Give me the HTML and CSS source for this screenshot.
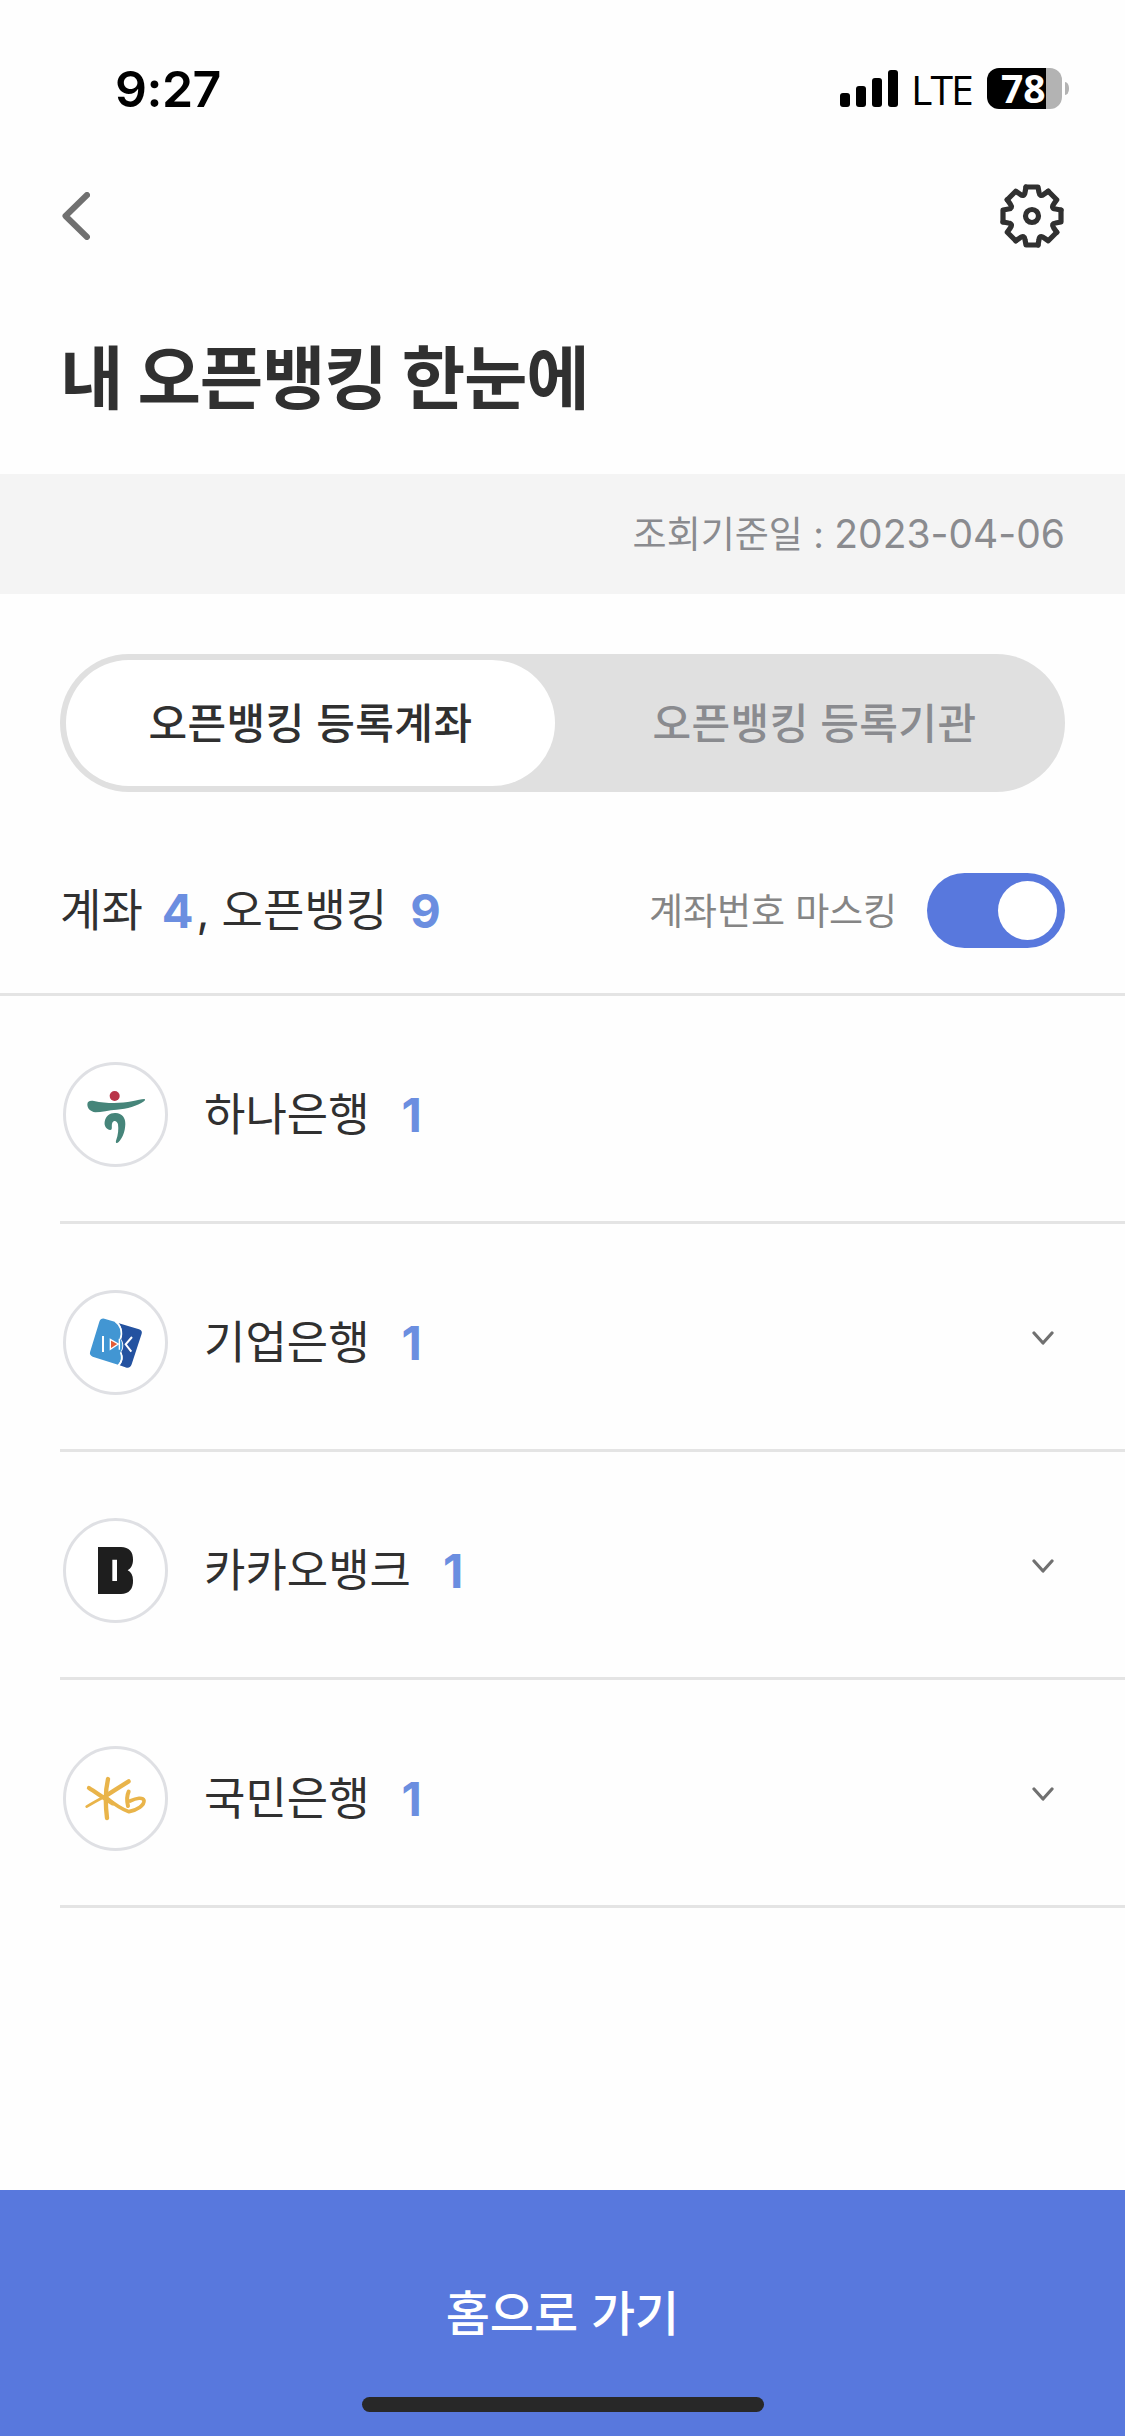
FILE: index.html
```
<!DOCTYPE html>
<html lang="ko">
<head>
<meta charset="utf-8">
<title>내 오픈뱅킹 한눈에</title>
<link rel="stylesheet" href="styles.css">
</head>
<body>
<div class="screen">
  <div class="status-bar">
    <span class="time">9:27</span>
    <div class="status-icons">
      <svg class="signal" viewBox="0 0 58 37"><rect y="23" width="10" height="14" rx="3"/><rect x="16" y="16" width="10" height="21" rx="3"/><rect x="32" y="8" width="10" height="29" rx="3"/><rect x="48" width="10" height="37" rx="3"/></svg>
      <span class="network">LTE</span>
      <div class="battery"><span class="battery-level">78</span></div>
      <span class="battery-nub"></span>
    </div>
  </div>

  <header class="nav">
    <svg class="back" viewBox="0 0 28 48"><path d="M25 3 3.5 24 25 45"/></svg>
    <svg class="gear" viewBox="-32 -32 64 64">
      <defs><path id="tooth" d="M-6-29H6L7-23.5C7.4-20.5 9.27-19.7 11.67-21.57L16.26-24.75"/></defs>
      <use href="#tooth"/><use href="#tooth" transform="rotate(45)"/><use href="#tooth" transform="rotate(90)"/><use href="#tooth" transform="rotate(135)"/><use href="#tooth" transform="rotate(180)"/><use href="#tooth" transform="rotate(225)"/><use href="#tooth" transform="rotate(270)"/><use href="#tooth" transform="rotate(315)"/>
      <circle r="6.5"/>
    </svg>
  </header>

  <h1 class="title">내 오픈뱅킹 한눈에</h1>
  <div class="base-date">조회기준일 : <span class="date">2023-04-06</span></div>

  <div class="tabs">
    <div class="tab tab-active">오픈뱅킹 등록계좌</div>
    <div class="tab">오픈뱅킹 등록기관</div>
  </div>

  <div class="summary">
    <div class="counts"><span>계좌</span><b class="count-accounts">4</b><span class="comma">,</span><span>오픈뱅킹</span><b class="count-open">9</b></div>
    <div class="masking"><span class="masking-label">계좌번호 마스킹</span><div class="toggle"><div class="knob"></div></div></div>
  </div>

  <ul class="banks">
    <li class="bank">
      <svg class="logo" viewBox="69 66 315 315"><circle class="ring" cx="226.500" cy="223.500" r="153"/>
        <circle cx="224" cy="168" r="15" fill="#b93549"/>
        <path fill="#46857a" d="M142 194C142 184 149 181 162 183 199 191 242 191 276 184 292 181 304 177 313 177 316 178 316 181 312 184 291 198 262 207 230 209 207 210 184 217 166 217 151 214 143 206 142 194Z"/>
        <path fill="#46857a" d="M211 270C199 268 192 258 194 245 197 227 210 218 227 219 246 220 257 234 256 252 255 275 249 292 236 306 231 311 226 310 228 302 235 284 236 267 234 253 232 242 221 239 217 248 213 257 219 269 211 270Z"/>
      </svg>
      <span class="name">하나은행</span><b class="num">1</b>
    </li>
    <li class="bank">
      <svg class="logo" viewBox="69 60 315 315"><circle class="ring" cx="226.500" cy="217.500" r="153"/>
        <path fill="#4296d3" d="M193 146 224 155C242 165 248 183 241 207 249 219 249 236 241 247 249 261 243 275 234 284L158 260Q148 256 150 247L178 155Q182 144 193 146Z"/>
        <path fill="#2452a0" d="M234 159 297 178Q308 182 305 191L275 283Q271 295 260 293L239 286C248 276 252 262 243 247 252 236 252 218 243 207 248 188 247 171 234 159Z"/>
        <path fill="none" stroke="#fff" stroke-width="5" d="M225 153C242 165 249 186 241 207M242 247C249 263 244 277 235 287"/>
        <path fill="#e35b35" stroke="#fff" stroke-width="4" d="M211 208V238L235 222Z"/>
        <path fill="none" stroke="#fff" stroke-width="6" d="M189 198V246M276 201 257 223 274 245"/>
        <path fill="none" stroke="#fff" stroke-width="4" d="M238 206V239"/>
      </svg>
      <span class="name">기업은행</span><b class="num">1</b>
      <svg class="chevron" viewBox="0 0 22 14"><path d="M2 2 11 12 20 2"/></svg>
    </li>
    <li class="bank">
      <svg class="logo" viewBox="69 54 315 315"><circle class="ring" cx="226.500" cy="211.500" r="153"/>
        <path fill="#1e1e1e" fill-rule="evenodd" d="M174 141H243C267 141 280 156 279 180 279 195 272 206 263 211 273 216 279 226 279 241 280 267 267 282 243 282H174ZM217 179V243H231V179Z"/>
      </svg>
      <span class="name">카카오뱅크</span><b class="num">1</b>
      <svg class="chevron" viewBox="0 0 22 14"><path d="M2 2 11 12 20 2"/></svg>
    </li>
    <li class="bank">
      <svg class="logo" viewBox="69 48 315 315"><circle class="ring" cx="226.500" cy="205.500" r="153"/>
        <g fill="none" stroke="#e9b44a" stroke-linecap="round" stroke-linejoin="round">
          <path stroke-width="13" d="M204 147C196 181 195 216 201 264"/>
          <path stroke-width="13" d="M266 154C242 169 218 184 197 198M147 174C172 190 196 207 218 220"/>
          <path stroke-width="8" d="M197 198C178 208 158 219 140 230"/>
          <path stroke-width="11" d="M198 202C222 222 246 238 267 245 292 240 314 226 312 211 308 201 290 204 270 213"/>
          <path stroke-width="12" d="M266 185C260 198 260 212 264 228"/>
        </g>
      </svg>
      <span class="name">국민은행</span><b class="num">1</b>
      <svg class="chevron" viewBox="0 0 22 14"><path d="M2 2 11 12 20 2"/></svg>
    </li>
  </ul>

  <footer class="home">
    <span class="home-label">홈으로 가기</span>
    <div class="home-indicator"></div>
  </footer>
</div>
</body>
</html>
```
FILE: styles.css
```
* { box-sizing: border-box; margin: 0; padding: 0; }
body { background: #fefefe; color: #303030; font-family: "Inter", "Noto Sans CJK KR", sans-serif; }
.screen { width: 1125px; height: 2436px; display: flex; flex-direction: column; white-space: nowrap; overflow: hidden; }

.status-bar { height: 132px; padding: 45px 56px 0 115px; display: flex; justify-content: space-between; align-items: flex-start; color: #000; }
.time { font-size: 50px; line-height: 88px; font-weight: 600; letter-spacing: -0.5px; }
.status-icons { display: flex; align-items: center; height: 87px; }
.signal { width: 58px; height: 37px; margin-right: 13px; }
.network { font-family: "Open Sans", sans-serif; font-size: 41px; line-height: 62px; font-weight: 500; letter-spacing: -2px; width: 60px; margin-right: 16px; }
.battery { width: 75px; height: 41px; border-radius: 12px; background: linear-gradient(90deg, #000 59px, #b3b3b3 59px); color: #fff; padding-left: 14px; }
.battery-level { display: block; font-family: "Open Sans", sans-serif; font-size: 39px; line-height: 39px; font-weight: 700; }
.battery-nub { width: 4px; height: 13px; margin-left: 3px; background: #b3b3b3; border-radius: 0 4px 4px 0 / 0 6px 6px 0; }

.nav { height: 168px; padding: 0 61px 0 62px; display: flex; align-items: center; justify-content: space-between; }
.back { width: 28px; height: 48px; fill: none; stroke: #707070; stroke-width: 6; stroke-linecap: round; stroke-linejoin: round; }
.gear { width: 64px; height: 64px; fill: none; stroke: #303030; stroke-width: 5.2; stroke-linecap: round; stroke-linejoin: round; }

.title { height: 174px; padding-left: 60px; font-size: 69px; line-height: 159px; font-weight: 700; letter-spacing: -1.2px; }
.base-date { height: 120px; padding-right: 60px; background: #f4f4f4; color: #8a8b8f; font-size: 37px; line-height: 120px; text-align: right; }
.date { font-size: 39px; }

.tabs { height: 138px; margin: 60px 60px 0; padding: 6px; display: flex; border-radius: 69px; background: #e0e0e0; }
.tab { flex: 1; padding-left: 15px; border-radius: 63px; color: #8a8b8f; font-size: 42px; line-height: 127px; letter-spacing: 0.4px; font-weight: 500; text-align: center; }
.tab-active { flex: 0 0 489px; padding-left: 0; background: #fff; color: #303030; }

.summary { height: 204px; padding: 36px 60px 0; border-bottom: 3px solid #e4e4e4; display: flex; justify-content: space-between; align-items: center; }
.counts { display: flex; font-size: 45px; line-height: 66px; }
.counts b, .num { color: #6b8ee0; font-weight: 700; font-size: 47px; }
.count-accounts { margin-left: 19px; }
.comma { width: 28px; padding-left: 3px; }
.count-open { margin-left: 23px; }
.masking { display: flex; align-items: center; gap: 30px; color: #858585; font-size: 37px; letter-spacing: -0.1px; }
.masking-label { padding-bottom: 4px; }
.toggle { width: 138px; height: 75px; padding: 8px; border-radius: 38px; background: #5878dd; display: flex; justify-content: flex-end; }
.knob { width: 59px; height: 59px; border-radius: 50%; background: #fff; }

.banks { list-style: none; margin-left: 60px; }
.bank { height: 228px; padding: 12px 70px 0 3px; border-bottom: 3px solid #e4e4e4; display: flex; align-items: center; font-size: 45px; line-height: 66px; }
.logo { width: 105px; height: 105px; margin-right: 36px; }
.ring { fill: #fff; stroke: #dfe0e4; stroke-width: 9; }
.num { margin-left: 32px; }
.chevron { width: 22px; height: 14px; margin: -10px 1px 0 auto; fill: none; stroke: #707070; stroke-width: 3.2; stroke-linecap: round; stroke-linejoin: round; }

.home { height: 246px; margin-top: auto; padding-top: 74px; background: #5878dd; color: #fff; display: flex; flex-direction: column; align-items: center; }
.home-label { font-size: 48px; line-height: 100px; height: 133px; font-weight: 500; }
.home-indicator { width: 402px; height: 15px; border-radius: 8px; background: #282828; }
```
